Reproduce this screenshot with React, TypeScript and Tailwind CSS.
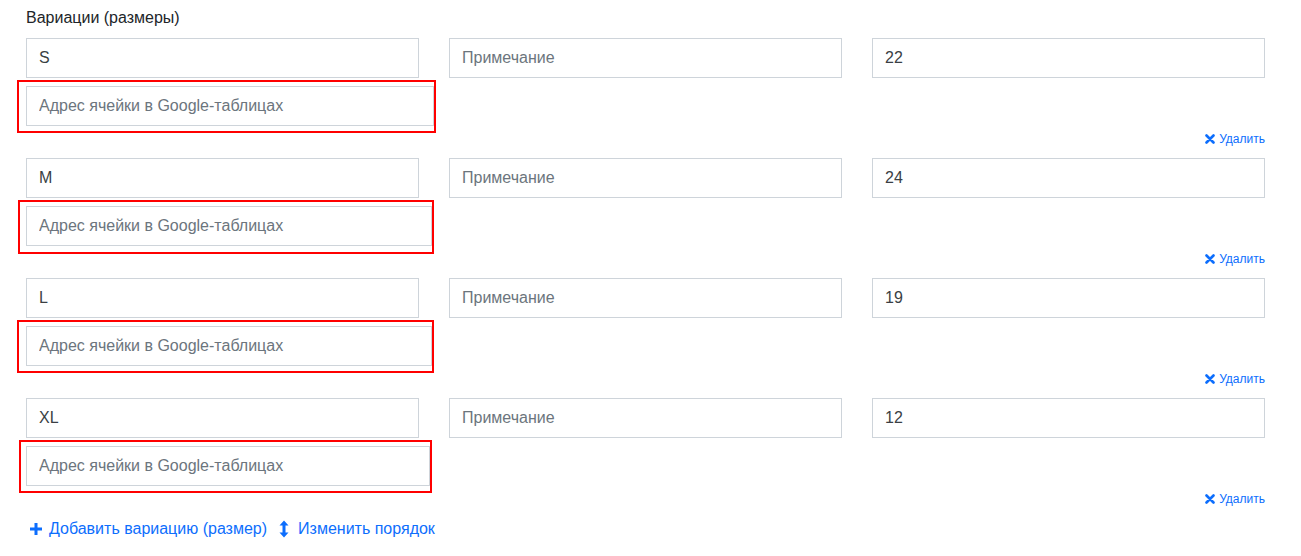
import React from "react";

const rows = [
  { size: "S", qty: "22", box: "ml-[-9px] w-[419px] pl-[7px] pt-[4px] pb-[5px]" },
  { size: "M", qty: "24", box: "ml-[-8px] w-[416px] pl-[6px] pt-[4px] pb-[6px]" },
  { size: "L", qty: "19", box: "ml-[-9px] w-[417px] pl-[7px] pt-[4px] pb-[5px]" },
  { size: "XL", qty: "12", box: "ml-[-7px] w-[413px] pl-[5px] pt-[4px] pb-[5px]" },
];

const inputCls =
  "w-full h-[40px] border border-[#ced4da] bg-white px-3 text-[16px] text-[#3a3f44] placeholder:text-[#6c757d] outline-none";

const XIcon = () => (
  <svg width="10" height="10" viewBox="0 0 10 10" className="mr-[4px]">
    <path d="M1.5 1.5 L8.5 8.5 M8.5 1.5 L1.5 8.5" stroke="#0d6efd" strokeWidth="2.6" strokeLinecap="round" />
  </svg>
);

const PlusIcon = () => (
  <svg width="14" height="14" viewBox="0 0 14 14" className="mr-[6px]">
    <path d="M7 1 V13 M1 7 H13" stroke="#0d6efd" strokeWidth="3" />
  </svg>
);

const ArrowsV = () => (
  <svg width="10" height="18" viewBox="0 0 10 18" className="mr-[9px]">
    <path d="M5 0.5 L9.5 5.5 H6.5 V12.5 H9.5 L5 17.5 L0.5 12.5 H3.5 V5.5 H0.5 Z" fill="#0d6efd" />
  </svg>
);

export default function App() {
  return (
    <div className="w-[1301px] h-[556px] bg-white pl-[26px] pt-[7px] font-['Liberation_Sans',Arial,sans-serif]">
      <div className="w-[1239px]">
        <div className="text-[16px] leading-[22px] text-[#212529]">Вариации (размеры)</div>
        <div className="mt-[9px] flex flex-col gap-[12px]">
          {rows.map((r) => (
            <div key={r.size}>
              <div className="grid grid-cols-[393px_393px_393px] gap-x-[30px]">
                <input className={inputCls} defaultValue={r.size} readOnly />
                <input className={inputCls} placeholder="Примечание" readOnly />
                <input className={inputCls} defaultValue={r.qty} readOnly />
              </div>
              <div className="mt-[2px] flex items-start">
                <div className={"border-2 border-[#ff0000] " + r.box}>
                  <input className={inputCls + " w-[393px]"} placeholder="Адрес ячейки в Google-таблицах" readOnly />
                </div>
                <a className="ml-auto mt-[52px] flex items-center text-[12px] leading-[14px] text-[#0d6efd]">
                  <XIcon />
                  Удалить
                </a>
              </div>
            </div>
          ))}
        </div>
        <div className="mt-[11px] flex items-center text-[16px] leading-[24px] text-[#0d6efd] ml-[3px]">
          <a className="flex items-center">
            <PlusIcon />
            Добавить вариацию (размер)
          </a>
          <a className="flex items-center ml-[12px]">
            <ArrowsV />
            Изменить порядок
          </a>
        </div>
      </div>
    </div>
  );
}
